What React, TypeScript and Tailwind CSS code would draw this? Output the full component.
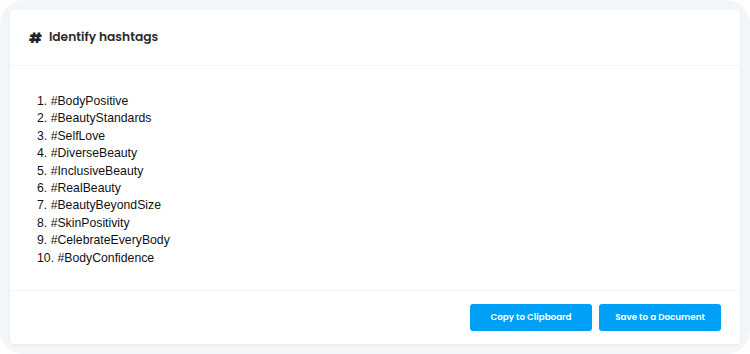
import React from "react";

const hashtags = [
  "#BodyPositive",
  "#BeautyStandards",
  "#SelfLove",
  "#DiverseBeauty",
  "#InclusiveBeauty",
  "#RealBeauty",
  "#BeautyBeyondSize",
  "#SkinPositivity",
  "#CelebrateEveryBody",
  "#BodyConfidence",
];

export default function App() {
  return (
    <div className="w-[750px] h-[354px] bg-white">
      <div className="h-full rounded-[24px] bg-[#f3f6f9] p-[10px]">
        <div className="h-full flex flex-col bg-white rounded-[4px] shadow-[0_1px_3px_rgba(15,23,42,0.06)] font-['Poppins','Inter',sans-serif]">
          {/* Header */}
          <div className="h-[56px] flex items-center px-[19px] border-b border-[#f3f5f8]">
            <span className="text-[14px] font-extrabold text-[#222] mr-[7px] leading-none">#</span>
            <h2 className="text-[12.25px] font-semibold text-[#2b2b2b]">
              Identify hashtags
            </h2>
          </div>

          {/* Body */}
          <div className="flex-1 px-[27px] pt-[27px] font-['Liberation_Sans',Arial,sans-serif] text-[12.25px] leading-[17.4px] text-[#111]">
            {hashtags.map((tag, i) => (
              <div key={tag}>
                {i + 1}. {tag}
              </div>
            ))}
          </div>

          {/* Footer */}
          <div className="h-[54px] flex items-center justify-end gap-[7px] px-[19px] border-t border-[#f3f5f8]">
            <button className="w-[122px] h-[27px] rounded-[3px] bg-[#00a0f7] text-white text-[8.75px] font-semibold">
              Copy to Clipboard
            </button>
            <button className="w-[122px] h-[27px] rounded-[3px] bg-[#00a0f7] text-white text-[8.75px] font-semibold">
              Save to a Document
            </button>
          </div>
        </div>
      </div>
    </div>
  );
}
